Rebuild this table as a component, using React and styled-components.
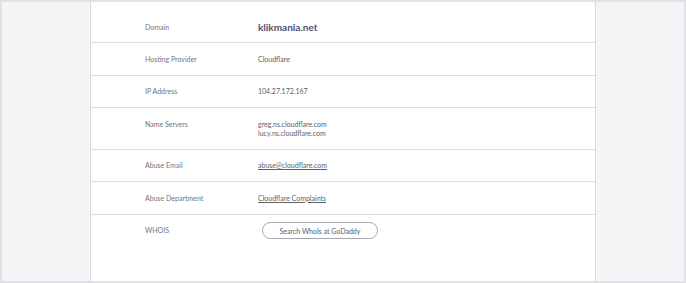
import React from "react";
import styled, { createGlobalStyle } from "styled-components";

const GlobalStyle = createGlobalStyle`
  * { box-sizing: border-box; }
  html, body { margin: 0; padding: 0; background: #e2e3e6; }
  body { font-family: Lato, "Open Sans", sans-serif; }
`;

const rows = [
  { label: "Domain", value: "klikmania.net", kind: "domain" },
  { label: "Hosting Provider", value: "Cloudflare" },
  { label: "IP Address", value: "104.27.172.167" },
  { label: "Name Servers", value: ["greg.ns.cloudflare.com", "lucy.ns.cloudflare.com"] },
  { label: "Abuse Email", value: "abuse@cloudflare.com", kind: "link" },
  { label: "Abuse Department", value: "Cloudflare Complaints", kind: "link" },
];

const App = () => {
  return (
    <>
      <GlobalStyle />
      <Frame>
        <Side />
        <Main>
          {rows.map((row, i) => (
            <Row key={row.label} first={i === 0}>
              <Label>{row.label}</Label>
              {row.kind === "domain" && <DomainName>{row.value}</DomainName>}
              {row.kind === "link" && (
                <Value>
                  <Link href="#">{row.value}</Link>
                </Value>
              )}
              {!row.kind && (
                <Value>
                  {Array.isArray(row.value)
                    ? row.value.map((v) => <div key={v}>{v}</div>)
                    : row.value}
                </Value>
              )}
            </Row>
          ))}
          <Row last>
            <Label>WHOIS</Label>
            <div>
              <SearchBtn>Search WhoIs at GoDaddy</SearchBtn>
            </div>
          </Row>
        </Main>
        <Side />
      </Frame>
    </>
  );
};

const Frame = styled.div`
  width: 686px;
  height: 283px;
  border: 2px solid #e1e2e5;
  display: flex;
  background: #f4f5f7;
  overflow: hidden;
`;

const Side = styled.div`
  width: 88px;
  flex-shrink: 0;
  background: #f4f5f7;
`;

const Main = styled.div`
  flex: 1;
  background: #fff;
  border-left: 1px solid #d8dade;
  border-right: 1px solid #d8dade;
  display: flex;
  flex-direction: column;
`;

const Row = styled.div`
  display: grid;
  grid-template-columns: 113px 1fr;
  padding: ${(p) => (p.first ? "20px 0 10px" : "11.5px 0 11px")} 54px;
  border-bottom: ${(p) => (p.last ? "none" : "1px solid #dcdde1")};
  flex: ${(p) => (p.last ? 1 : "none")};
  align-items: ${(p) => (p.first ? "center" : "start")};
`;

const Label = styled.div`
  font-size: 7px;
  line-height: 9px;
  color: #6f7480;
`;

const Value = styled.div`
  font-size: 7px;
  line-height: 9px;
  color: #5b606b;
`;

const DomainName = styled.div`
  font-size: 10px;
  line-height: 10px;
  font-weight: 700;
  color: #4b5468;
`;

const Link = styled.a`
  color: #5b606b;
  text-decoration: underline;
`;

const SearchBtn = styled.button`
  display: block;
  margin: -4px 0 0 4px;
  width: 116px;
  height: 17px;
  border: 1px solid #a3a7b0;
  border-radius: 9px;
  background: #fff;
  font-family: Lato, "Open Sans", sans-serif;
  font-size: 7px;
  color: #5b606b;
  padding: 0;
`;

export default App;
